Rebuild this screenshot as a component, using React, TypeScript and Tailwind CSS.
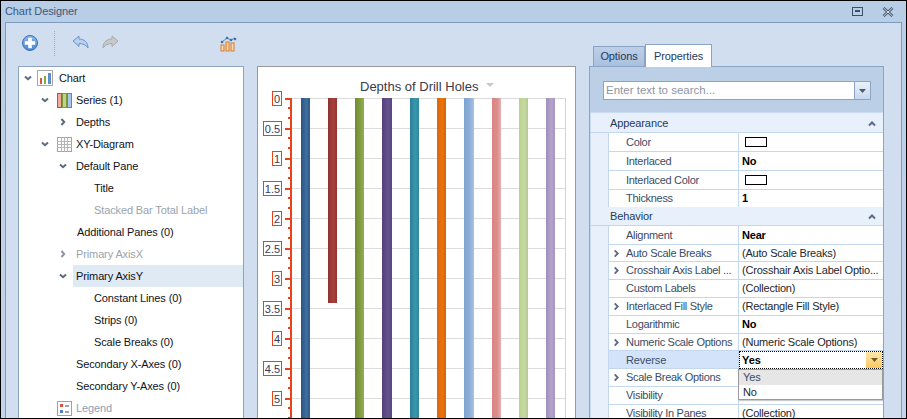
import React from "react";

const font = "[font-family:'Liberation_Sans',Arial,sans-serif]";

function Chev({ dir, light }: { dir: "down" | "right"; light?: boolean }) {
  return (
    <svg width="10" height="10" viewBox="0 0 10 10" className="shrink-0">
      <polyline
        points={dir === "down" ? "2,3.4 5,6.2 8,3.4" : "3.4,2 6.2,5 3.4,8"}
        fill="none"
        stroke={light ? "#8a97a8" : "#5b6b82"}
        strokeWidth="2"
      />
    </svg>
  );
}

function ChartIcon() {
  return (
    <svg width="16" height="16" viewBox="0 0 16 16" className="shrink-0">
      <rect x="0.5" y="0.5" width="15" height="15" fill="#fff" stroke="#a8a8a8" />
      <rect x="3" y="8" width="2" height="6" fill="#d9534a" />
      <rect x="7" y="6" width="2" height="8" fill="#8aa83c" />
      <rect x="11" y="3" width="3" height="11" fill="#5b8fcb" />
    </svg>
  );
}
function SeriesIcon() {
  return (
    <svg width="15" height="15" viewBox="0 0 15 15" className="shrink-0">
      <rect x="0.5" y="0.5" width="4" height="14" fill="#f2a9a0" stroke="#c8493f" />
      <rect x="5.5" y="0.5" width="4" height="14" fill="#bcd28a" stroke="#7d9a35" />
      <rect x="10.5" y="0.5" width="4" height="14" fill="#a9c6ea" stroke="#5388c6" />
    </svg>
  );
}
function GridIcon() {
  return (
    <svg width="15" height="15" viewBox="0 0 15 15" className="shrink-0">
      <rect x="0.5" y="0.5" width="14" height="14" fill="#fff" stroke="#a3a3a3" />
      <path d="M0 4.5H15M0 7.5H15M0 10.5H15M4.5 0V15M7.5 0V15M10.5 0V15" stroke="#b5b5b5" strokeWidth="1" />
    </svg>
  );
}
function LegendIcon() {
  return (
    <svg width="15" height="15" viewBox="0 0 15 15" className="shrink-0">
      <rect x="0.5" y="0.5" width="14" height="14" fill="#fff" stroke="#a3a3a3" />
      <rect x="3" y="3" width="3" height="3" fill="#d9534a" />
      <rect x="3" y="9" width="3" height="3" fill="#4f81bd" />
      <rect x="8" y="4" width="4" height="2" fill="#9aa5b4" />
      <rect x="8" y="10" width="4" height="2" fill="#9aa5b4" />
    </svg>
  );
}

function Rw({ pad, chev, light, icon, gap, text, hl, inset }: {
  pad: string; chev?: "down" | "right"; light?: boolean; icon?: React.ReactNode; gap?: string; text: string; hl?: boolean; inset?: string;
}) {
  return (
    <div className={"flex h-[22px] items-center " + pad}>
      {chev && <Chev dir={chev} light={light} />}
      {icon}
      <div className={"flex h-full flex-1 items-center " + (gap ?? "") + " " + (hl ? "bg-[#e0eaf5]" : "") + " " + (inset ?? "")}>
        <span className={light ? "text-[#9aa3ad]" : "text-[#10131a]"}>{text}</span>
      </div>
    </div>
  );
}

function Tree() {
  return (
    <div className={"h-full w-[226px] overflow-hidden border-x border-t border-[#8ba4c4] bg-white text-[11px] tracking-[-0.12px] " + font}>
      <div className="flex h-[22px] items-center pl-[4px]">
        <Chev dir="down" />
        <span className="ml-[4px]"><ChartIcon /></span>
        <span className="ml-[6px] text-[#10131a]">Chart</span>
      </div>
      <div className="flex h-[22px] items-center pl-[21px]">
        <Chev dir="down" />
        <span className="ml-[7px]"><SeriesIcon /></span>
        <span className="ml-[4px] text-[#10131a]">Series (1)</span>
      </div>
      <Rw pad="pl-[39px]" chev="right" text="Depths" inset="pl-[8px]" />
      <div className="flex h-[22px] items-center pl-[21px]">
        <Chev dir="down" />
        <span className="ml-[7px]"><GridIcon /></span>
        <span className="ml-[4px] text-[#10131a]">XY-Diagram</span>
      </div>
      <Rw pad="pl-[39px]" chev="down" text="Default Pane" inset="pl-[8px]" />
      <Rw pad="pl-[75px]" text="Title" />
      <Rw pad="pl-[75px]" text="Stacked Bar Total Label" light />
      <Rw pad="pl-[58px]" text="Additional Panes (0)" />
      <Rw pad="pl-[39px]" chev="right" text="Primary AxisX" light inset="pl-[8px]" />
      <Rw pad="pl-[39px]" chev="down" text="Primary AxisY" hl inset="ml-[5px] pl-[3px]" />
      <Rw pad="pl-[75px]" text="Constant Lines (0)" />
      <Rw pad="pl-[75px]" text="Strips (0)" />
      <Rw pad="pl-[75px]" text="Scale Breaks (0)" />
      <Rw pad="pl-[57px]" text="Secondary X-Axes (0)" />
      <Rw pad="pl-[57px]" text="Secondary Y-Axes (0)" />
      <div className="flex h-[22px] items-center pl-[38px]">
        <LegendIcon />
        <span className="ml-[4px] text-[#8a9fbd]">Legend</span>
      </div>
    </div>
  );
}

const bars: [number, number, string, string, string][] = [
  [301, 9, "#2b5582", "#3f6f9f", "#2f5a88"],
  [328, 9, "#8f3330", "#a8403c", "#93352f"],
  [355, 9, "#6f8a32", "#83a040", "#94ab5c"],
  [382, 10, "#53407a", "#66528c", "#5a4680"],
  [410, 9, "#2a8099", "#3a96ae", "#2d87a0"],
  [437, 9, "#dc6808", "#e87310", "#d56505"],
  [464, 10, "#7da3d0", "#8fb0da", "#a9c2e0"],
  [492, 9, "#d88482", "#dc8e8c", "#e5b0ae"],
  [519, 9, "#bad28e", "#c6da9f", "#b5c795"],
  [546, 9, "#a08ebd", "#b3a4cc", "#a795c2"],
];

const labels = ["0", "0.5", "1", "1.5", "2", "2.5", "3", "3.5", "4", "4.5", "5"];
const boxW = [10, 19, 10, 19, 10, 19, 10, 19, 10, 19, 10];

function Chart() {
  return (
    <div className="h-full w-[319px] overflow-hidden border-x border-t border-[#999999] bg-white">
      <svg width="317" height="352" viewBox="258 67 317 352" className="block">
        <defs>
          {bars.map((b, i) => (
            <linearGradient key={i} id={"g" + i} x1="0" x2="1" y1="0" y2="0">
              <stop offset="0" stopColor={b[2]} />
              <stop offset="0.6" stopColor={b[3]} />
              <stop offset="1" stopColor={b[4]} />
            </linearGradient>
          ))}
        </defs>
        <text x="360" y="90.5" fontSize="13" fill="#3a3a4c" fontFamily="'Liberation Sans',Arial,sans-serif">Depths of Drill Holes</text>
        <polygon points="486,83 494,83 490,87" fill="#c8c8c8" />
        {labels.map((_, i) => (
          <line key={i} x1="291" x2="565" y1={98.5 + i * 30} y2={98.5 + i * 30} stroke="#dcdcdc" strokeWidth="1" />
        ))}
        <line x1="565.5" x2="565.5" y1="98" y2="419" stroke="#d4d4d4" />
        {bars.map((b, i) => (
          <rect key={i} x={b[0]} y="98" width={b[1]} height={i === 1 ? 205 : 321} fill={`url(#g${i})`} />
        ))}
        <rect x="290" y="98" width="2" height="321" fill="#e8421c" />
        {labels.map((l, i) => (
          <g key={l}>
            <rect x="285" y={98 + i * 30} width="6" height="2" fill="#e8421c" />
            <rect x="288" y={107 + i * 30} width="3" height="2" fill="#e8421c" />
            <rect x="288" y={117 + i * 30} width="3" height="2" fill="#e8421c" />
            <rect x={282 - boxW[i]} y={91 + i * 30} width={boxW[i]} height="15" fill="#e8421c" />
            <rect x={283 - boxW[i]} y={92 + i * 30} width={boxW[i] - 2} height="13" fill="#ffffff" />
            <text x={282 - boxW[i] / 2} y={102.5 + i * 30} textAnchor="middle" fontSize="11" fill="#3a3a52" fontFamily="'Liberation Sans',Arial,sans-serif">{l}</text>
          </g>
        ))}
      </svg>
    </div>
  );
}

function Cat({ text, h, pt }: { text: string; h: string; pt?: string }) {
  return (
    <div className={"flex items-center justify-between border-b border-[#c3d7f1] pl-[19px] pr-[6px] text-[#1e395b] " + h + " " + (pt ?? "")}>
      <span>{text}</span>
      <svg width="10" height="7" viewBox="0 0 10 7"><polyline points="2,5.5 5,2.5 8,5.5" fill="none" stroke="#5b6b82" strokeWidth="2" /></svg>
    </div>
  );
}

function Prop({ name, value, h, exp, bold, swatch, noline }: {
  name: string; value?: string; h: string; exp?: boolean; bold?: boolean; swatch?: boolean; noline?: boolean;
}) {
  return (
    <div className={"flex " + h}>
      <div className="w-[17px] shrink-0" />
      <div className={"flex w-[131px] shrink-0 items-center border-l border-r border-[#c3d7f1] bg-white pl-[3px] tracking-[-0.3px] text-[#3a4c66] " + (noline ? "" : "border-b")}>
        <span className="flex w-[14px] shrink-0">{exp && <svg width="9" height="9" viewBox="0 0 10 10"><polyline points="3,1.5 6.4,5 3,8.5" fill="none" stroke="#5b6b82" strokeWidth="2" /></svg>}</span>
        <span className="whitespace-nowrap">{name}</span>
      </div>
      <div className={"flex flex-1 items-center overflow-hidden border-[#c3d7f1] bg-white pl-[3px] tracking-[-0.2px] " + (noline ? "" : "border-b ") + (bold ? "font-bold text-black" : "text-[#23262c]")}>
        {swatch ? <span className="ml-[3px] h-[10px] w-[22px] border border-black bg-white" /> : <span className="whitespace-nowrap">{value}</span>}
      </div>
    </div>
  );
}

function Props() {
  return (
    <div className={"flex h-full w-[295px] flex-col " + font}>
      <div className="relative z-10 -mb-px flex h-[23px] items-end pl-[4px] text-[11px] tracking-[-0.1px]">
        <div className="flex h-[21px] w-[52px] items-center justify-center border-x border-t border-b border-[#8ba4c4] bg-gradient-to-b from-[#bdd0e8] to-[#a9c0de] text-[#1e395b]">Options</div>
        <div className="flex h-[23px] w-[67px] items-center justify-center border-x border-t border-[#8ba4c4] bg-white text-[#1e395b]">Properties</div>
      </div>
      <div className="flex-1 overflow-hidden border-x border-t border-[#8ba4c4] bg-[#bbcfe6] pt-[14px]">
        <div className="ml-[13px] flex h-[19px] w-[268px] border border-[#8ba4c4] bg-white">
          <div className="flex flex-1 items-center pl-[2px] text-[11.5px] text-[#8c96a3]">Enter text to search...</div>
          <div className="flex w-[16px] items-center justify-center border-l border-[#8ba4c4] bg-gradient-to-b from-[#eaf2fb] to-[#c6d8ee]">
            <svg width="7" height="4" viewBox="0 0 7 4"><polygon points="0,0 7,0 3.5,4" fill="#4c5c74" /></svg>
          </div>
        </div>
        <div className="relative mt-[12px] h-[400px] border-t border-l border-[#c9dcf4] bg-[#e8f1fb] text-[11px] tracking-[-0.1px]">
          <Cat text="Appearance" h="h-[20px]" pt="pt-[1px]" />
          <Prop name="Color" swatch h="h-[19px]" />
          <Prop name="Interlaced" value="No" bold h="h-[19px]" />
          <Prop name="Interlaced Color" swatch h="h-[19px]" />
          <Prop name="Thickness" value="1" bold h="h-[17px]" noline />
          <Cat text="Behavior" h="h-[19px]" />
          <Prop name="Alignment" value="Near" bold h="h-[19px]" />
          <Prop name="Auto Scale Breaks" value="(Auto Scale Breaks)" exp h="h-[17px]" />
          <Prop name="Crosshair Axis Label ..." value="(Crosshair Axis Label Optio..." exp h="h-[18px]" />
          <Prop name="Custom Labels" value="(Collection)" h="h-[18px]" />
          <Prop name="Interlaced Fill Style" value="(Rectangle Fill Style)" exp h="h-[18px]" />
          <Prop name="Logarithmic" value="No" bold h="h-[18px]" />
          <Prop name="Numeric Scale Options" value="(Numeric Scale Options)" exp h="h-[17px]" />
          <div className="flex h-[18px]">
            <div className="w-[17px] shrink-0" />
            <div className="flex w-[131px] shrink-0 items-center border-x border-b border-[#c3d7f1] bg-[#d3e4fa] pl-[17px] pt-[1px] text-[#3a4c66]">Reverse</div>
            <div className="flex flex-1 items-center justify-between border border-dotted border-black bg-white pl-[2px] font-bold text-black">
              <span>Yes</span>
              <div className="flex h-full w-[16px] items-center justify-center bg-gradient-to-b from-[#fde7a8] to-[#fbc95f]">
                <svg width="7" height="4" viewBox="0 0 7 4"><polygon points="0,0 7,0 3.5,4" fill="#6a5a30" /></svg>
              </div>
            </div>
          </div>
          <Prop name="Scale Break Options" exp h="h-[18px]" />
          <Prop name="Visibility" h="h-[18px]" />
          <Prop name="Visibility In Panes" value="(Collection)" h="h-[18px]" />
          <div className="absolute left-[147px] top-[256px] w-[145px] border border-[#9a9a9a] bg-white text-[#3a4c66] shadow-[1px_1px_1px_rgba(0,0,0,0.2)]">
            <div className="flex h-[15px] items-center bg-[#e6e6e6] pl-[4px]">Yes</div>
            <div className="flex h-[14px] items-center pl-[4px] text-[#23262c]">No</div>
          </div>
        </div>
      </div>
    </div>
  );
}

function Toolbar() {
  return (
    <div className="flex h-[43px] items-center">
      <svg width="18" height="18" viewBox="0 0 18 18" className="ml-[3px] mb-[3px]">
        <defs>
          <linearGradient id="pl" x1="0" x2="0" y1="0" y2="1">
            <stop offset="0" stopColor="#8db8e8" />
            <stop offset="1" stopColor="#4a86cf" />
          </linearGradient>
        </defs>
        <circle cx="9" cy="9" r="7.5" fill="url(#pl)" stroke="#3b74ba" />
        <path d="M7.2 3.8h3.6v3.4h3.4v3.6h-3.4v3.4H7.2v-3.4H3.8V7.2h3.4z" fill="#fff" />
      </svg>
      <div className="ml-[15px] mb-[3px] h-[25px] border-l border-dotted border-[#9aabc0]" />
      <svg width="18" height="16" viewBox="0 0 18 16" className="ml-[17px] mb-[3px]">
        <path d="M1 6 L7 1 V4 C12 4 16 7 16 13 C14 10 11 8.5 7 8.5 V11.5 Z" fill="#b7d0ee" stroke="#6a97cd" />
      </svg>
      <svg width="18" height="16" viewBox="0 0 18 16" className="ml-[11px] mb-[3px]">
        <path d="M17 6 L11 1 V4 C6 4 2 7 2 13 C4 10 7 8.5 11 8.5 V11.5 Z" fill="#c8c8c8" stroke="#a9a9a9" />
      </svg>
      <svg width="17" height="17" viewBox="0 0 17 17" className="ml-[101px] mb-[3px]">
        <rect x="1" y="10" width="3" height="6" fill="#fbd9a8" stroke="#d97b28" />
        <rect x="6" y="7" width="3" height="9" fill="#fbd9a8" stroke="#d97b28" />
        <rect x="11" y="8" width="3" height="8" fill="#fbd9a8" stroke="#d97b28" />
        <path d="M2 7 L7 3 L11 5 L15 3" fill="none" stroke="#5b7fb5" strokeWidth="1" />
        <circle cx="2" cy="7" r="1.3" fill="#3f6db0" />
        <circle cx="7" cy="3" r="1.3" fill="#3f6db0" />
        <circle cx="11" cy="5" r="1.3" fill="#3f6db0" />
        <circle cx="15" cy="4" r="1.3" fill="#3f6db0" />
      </svg>
    </div>
  );
}

export default function App() {
  return (
    <div className={"flex h-[419px] w-[907px] flex-col overflow-hidden border border-black bg-gradient-to-b from-[#b8cde6] to-[#c3d5ea] " + font}>
      <div className="flex h-[21px] shrink-0 items-center justify-between pl-[4px] pr-[12px] text-[11px] tracking-[-0.1px] text-[#3d5878]">
        <span>Chart Designer</span>
        <div className="flex items-center gap-[19px]">
          <svg width="11" height="9" viewBox="0 0 11 9"><rect x="0.5" y="0.5" width="10" height="8" fill="none" stroke="#3c5069" /><rect x="3" y="3" width="5" height="2" fill="#3c5069" /></svg>
          <svg width="12" height="10" viewBox="0 0 12 10"><path d="M1.5 1 L10.5 9 M10.5 1 L1.5 9" stroke="#3c5069" strokeWidth="2.6" /><path d="M1.5 1 L10.5 9 M10.5 1 L1.5 9" stroke="#dfe8f2" strokeWidth="1" /></svg>
        </div>
      </div>
      <div className="mx-[4px] flex min-h-0 flex-1 border-x border-t border-[#7f9bbf] bg-[#d0deef]">
        <div className="flex w-[570px] shrink-0 flex-col pl-[12px]">
          <Toolbar />
          <div className="flex min-h-0 flex-1 gap-[13px]">
            <Tree />
            <Chart />
          </div>
        </div>
        <div className="ml-[13px] pt-[21px]">
          <Props />
        </div>
      </div>
    </div>
  );
}
